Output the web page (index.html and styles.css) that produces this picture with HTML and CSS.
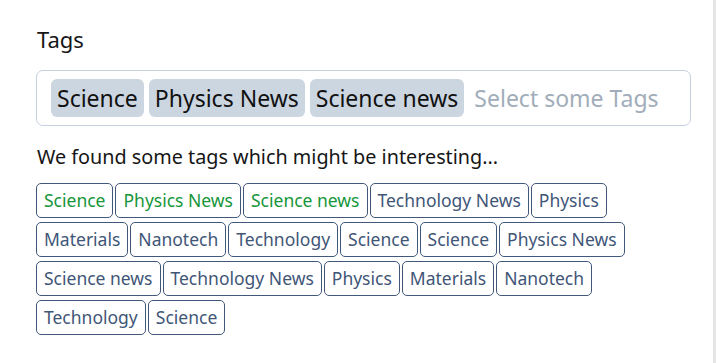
FILE: index.html
```html
<!DOCTYPE html>
<html>
<head>
<meta charset="utf-8">
<link rel="stylesheet" href="styles.css">
</head>
<body>
<div class="panel">
  <div class="label">Tags</div>
  <div class="select">
    <span class="chip">Science</span>
    <span class="chip">Physics News</span>
    <span class="chip">Science news</span>
    <span class="placeholder">Select some Tags</span>
  </div>
  <p class="hint">We found some tags which might be interesting...</p>
  <div class="suggestions">
    <span class="tag picked">Science</span>
    <span class="tag picked">Physics News</span>
    <span class="tag picked">Science news</span>
    <span class="tag">Technology News</span>
    <span class="tag">Physics</span>
    <span class="tag">Materials</span>
    <span class="tag">Nanotech</span>
    <span class="tag">Technology</span>
    <span class="tag">Science</span>
    <span class="tag">Science</span>
    <span class="tag">Physics News</span>
    <span class="tag">Science news</span>
    <span class="tag">Technology News</span>
    <span class="tag">Physics</span>
    <span class="tag">Materials</span>
    <span class="tag">Nanotech</span>
    <span class="tag">Technology</span>
    <span class="tag">Science</span>
  </div>
</div>
</body>
</html>
```
FILE: styles.css
```css
html, body {
  margin: 0;
  padding: 0;
  background: #fff;
}
body {
  font-family: "Noto Sans", "Open Sans", sans-serif;
  color: #161616;
}
.panel {
  width: 716px;
  height: 363px;
  box-sizing: border-box;
  padding: 24px 0 0 36px;
  border-right: 3px solid #e6e6e6;
}
.label {
  font-size: 22px;
  line-height: 30px;
  padding-left: 1px;
  margin-bottom: 16px;
}
.select {
  width: 655px;
  height: 56px;
  box-sizing: border-box;
  border: 1px solid #c6d1de;
  border-radius: 7px;
  display: flex;
  align-items: center;
  gap: 5px;
  padding: 0 14px;
}
.chip {
  background: #ccd6e1;
  border-radius: 6px;
  font-size: 23px;
  line-height: 38px;
  padding: 0 6px;
  color: #111;
}
.placeholder {
  font-size: 23px;
  color: #a2adba;
  margin-left: 5px;
}
.hint {
  margin: 18px 0 13px 1px;
  font-size: 19.8px;
  line-height: 26px;
}
.suggestions {
  display: flex;
  flex-wrap: wrap;
  gap: 4px 2px;
  width: 600px;
}
.tag {
  border: 1px solid #42587a;
  border-radius: 5px;
  font-size: 17.5px;
  line-height: 33px;
  padding: 0 7px;
  color: #3f5677;
}
.tag.picked {
  color: #16963a;
}
```
